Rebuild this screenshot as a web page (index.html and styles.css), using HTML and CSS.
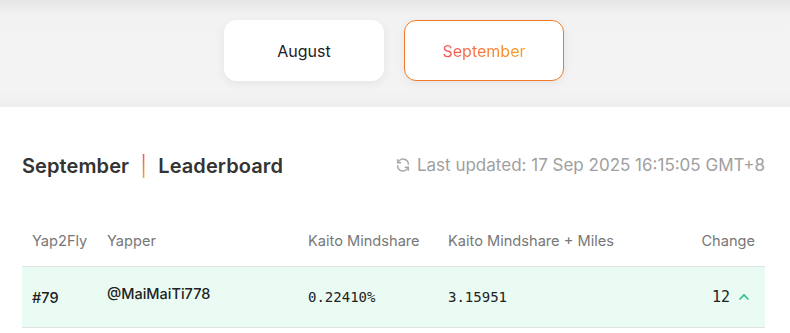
FILE: index.html
```html
<!DOCTYPE html>
<html>
<head>
<meta charset="utf-8">
<link rel="stylesheet" href="styles.css">
</head>
<body>
<div class="band">
  <div class="tabs">
    <button class="tab">August</button>
    <button class="tab active"><span class="grad">September</span></button>
  </div>
</div>
<div class="content">
  <div class="head">
    <h2 class="title">September <span class="sep">|</span> Leaderboard</h2>
    <div class="updated">
      <svg class="refresh" width="16" height="16" viewBox="0 0 24 24" fill="none" stroke="#aaa" stroke-width="2.2" stroke-linecap="round" stroke-linejoin="round"><path d="M20 11a8 8 0 0 0-14.6-4.4L4 8.5"/><path d="M4 4v4.5h4.5"/><path d="M4 13a8 8 0 0 0 14.6 4.4L20 15.5"/><path d="M20 20v-4.5h-4.5"/></svg>
      <span>Last updated: 17 Sep 2025 16:15:05 GMT+8</span>
    </div>
  </div>
  <div class="table">
    <div class="row header">
      <div>Yap2Fly</div>
      <div>Yapper</div>
      <div>Kaito Mindshare</div>
      <div>Kaito Mindshare + Miles</div>
      <div class="right">Change</div>
    </div>
    <div class="row data">
      <div class="rank">#79</div>
      <div class="user">@MaiMaiTi778</div>
      <div class="mono">0.22410%</div>
      <div class="mono">3.15951</div>
      <div class="right mono change">12 <svg width="12" height="8" viewBox="0 0 12 8" fill="none" stroke="#2bbf8a" stroke-width="1.6"><path d="M1.5 6.5 6 2l4.5 4.5"/></svg></div>
    </div>
  </div>
</div>
</body>
</html>
```
FILE: styles.css
```css
* { box-sizing: border-box; }
body {
  margin: 0;
  font-family: Inter, "Noto Sans", sans-serif;
  background: #fff;
  color: #222;
}
.band {
  height: 107px;
  background: linear-gradient(#e5e5e5 0, #f2f2f2 14px, #f3f3f3 90px, #eeeeee 107px);
  display: flex;
  justify-content: center;
  padding-top: 20px;
  padding-right: 2px;
}
.tabs {
  display: flex;
  gap: 20px;
}
.tab {
  width: 160px;
  height: 61px;
  border-radius: 12px;
  background: #fff;
  border: 1px solid #fff;
  font-family: Inter, "Noto Sans", sans-serif;
  font-size: 16px;
  color: #222;
  box-shadow: 0 3px 10px rgba(0,0,0,0.06);
  cursor: pointer;
}
.tab.active {
  border-color: #f07a2a;
}
.grad {
  background: linear-gradient(90deg, #f4555a, #f8a020);
  -webkit-background-clip: text;
  background-clip: text;
  color: transparent;
}
.content {
  padding: 0 25px 0 22px;
}
.head {
  display: flex;
  justify-content: space-between;
  align-items: flex-start;
  padding-top: 47px;
  height: 107px;
}
.title {
  margin: 0;
  font-size: 20px;
  font-weight: 600;
  color: #333;
  letter-spacing: 0.1px;
  line-height: 1.2;
}
.sep {
  background: linear-gradient(#f4555a, #f8a020);
  -webkit-background-clip: text;
  background-clip: text;
  color: transparent;
  font-weight: 400;
  margin: 0 6px;
}
.updated {
  display: flex;
  align-items: center;
  gap: 6px;
  color: #a0a0a0;
  font-size: 17px;
  padding-top: 1px;
}
.refresh { flex: none; }
.row {
  display: grid;
  grid-template-columns: 75px 201px 140px 1fr 120px;
  align-items: center;
  padding: 0 10px;
}
.header {
  height: 52px;
  font-size: 14.6px;
  color: #777;
  padding-top: 2px;
}
.data {
  height: 62px;
  background: #eafbf3;
  border-top: 1px solid #e2e2e2;
  border-bottom: 1px solid #e2e2e2;
  font-size: 14.5px;
  color: #222;
}
.rank { font-weight: 500; }
.user { font-weight: 500; margin-top: -8px; }
.mono {
  font-family: "DejaVu Sans Mono", "Liberation Mono", monospace;
  font-size: 14px;
}
.right { text-align: right; }
.change {
  display: flex;
  justify-content: flex-end;
  align-items: center;
  gap: 8px;
  font-size: 15px;
  padding-right: 5px;
}
```
